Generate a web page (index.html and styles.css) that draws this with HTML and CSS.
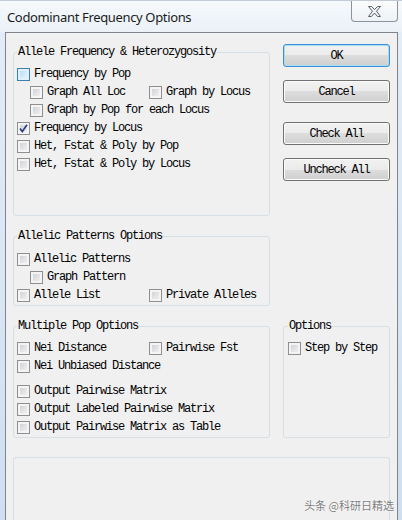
FILE: index.html
```html
<!DOCTYPE html>
<html lang="en">
<head>
  <meta charset="UTF-8">
  <title>Codominant Frequency Options</title>
  <link rel="stylesheet" href="styles.css">
</head>
<body>

  <div class="titlebar">
    <span class="title">Codominant Frequency Options</span>
    <div class="close-btn">
      <svg width="13" height="11" viewBox="0 0 13 11">
        <polygon points="0.5,0.5 3.5,0.5 6.5,3.6 9.5,0.5 12.5,0.5 8.5,5.2 12.5,10.5 9.5,10.5 6.5,7 3.5,10.5 0.5,10.5 4.5,5.2" fill="#f2f4f7" stroke="#5b6069" stroke-width="1"/>
      </svg>
    </div>
  </div>

  <div class="client">
    <div class="layout">

      <div class="col-left">
        <fieldset class="group group-freq">
          <legend>Allele Frequency &amp; Heterozygosity</legend>
          <label class="row"><span class="cb cb-hover"></span>Frequency by Pop</label>
          <div class="row indent">
            <label class="cell"><span class="cb"></span>Graph All Loc</label>
            <label><span class="cb"></span>Graph by Locus</label>
          </div>
          <label class="row indent"><span class="cb"></span>Graph by Pop for each Locus</label>
          <label class="row">
            <span class="cb">
              <svg width="11" height="11" viewBox="0 0 11 11"><polyline points="2,5.5 4.3,8.5 9,1.8" fill="none" stroke="#2c3f86" stroke-width="1.7"/></svg>
            </span>Frequency by Locus
          </label>
          <label class="row"><span class="cb"></span>Het, Fstat &amp; Poly by Pop</label>
          <label class="row"><span class="cb"></span>Het, Fstat &amp; Poly by Locus</label>
        </fieldset>

        <fieldset class="group group-patterns">
          <legend>Allelic Patterns Options</legend>
          <label class="row"><span class="cb"></span>Allelic Patterns</label>
          <label class="row indent"><span class="cb"></span>Graph Pattern</label>
          <div class="row">
            <label class="cell"><span class="cb"></span>Allele List</label>
            <label><span class="cb"></span>Private Alleles</label>
          </div>
        </fieldset>
      </div>

      <div class="col-buttons">
        <button class="btn btn-default">OK</button>
        <button class="btn">Cancel</button>
        <button class="btn btn-check">Check All</button>
        <button class="btn">Uncheck All</button>
      </div>

      <fieldset class="group group-multi">
        <legend>Multiple Pop Options</legend>
        <div class="row">
          <label class="cell"><span class="cb"></span>Nei Distance</label>
          <label><span class="cb"></span>Pairwise Fst</label>
        </div>
        <label class="row"><span class="cb"></span>Nei Unbiased Distance</label>
        <label class="row row-sep"><span class="cb"></span>Output Pairwise Matrix</label>
        <label class="row"><span class="cb"></span>Output Labeled Pairwise Matrix</label>
        <label class="row"><span class="cb"></span>Output Pairwise Matrix as Table</label>
      </fieldset>

      <fieldset class="group group-options">
        <legend>Options</legend>
        <label class="row"><span class="cb"></span>Step by Step</label>
      </fieldset>

      <div class="group group-empty">
        <span class="watermark">头条 @科研日精选</span>
      </div>

    </div>
  </div>

</body>
</html>
```

FILE: styles.css
```css
body {
  margin: 0;
  width: 402px;
  height: 520px;
  overflow: hidden;
  background: linear-gradient(#e4edf7, #cfdff0);
  font-family: "Liberation Mono", monospace;
  font-size: 12px;
  letter-spacing: -1.2px;
  color: #000;
}

.titlebar {
  height: 32px;
  display: flex;
  justify-content: space-between;
  align-items: flex-start;
  background: linear-gradient(#f6f9fc, #eaf1f8);
  border-top: 1px solid #c3ccd6;
  box-sizing: border-box;
}

.title {
  font-family: "Noto Sans", sans-serif;
  font-size: 13px;
  letter-spacing: -0.35px;
  color: #1b1b1b;
  padding: 7px 0 0 7px;
}

.close-btn {
  width: 47px;
  height: 21px;
  margin-right: 4px;
  box-sizing: border-box;
  border: 1px solid #8d939b;
  border-top: none;
  border-radius: 0 0 4px 4px;
  background: linear-gradient(#fbfcfd, #eef2f6);
  display: flex;
  justify-content: center;
  align-items: center;
}

.client {
  margin-left: 5px;
  width: 393px;
  height: 488px;
  box-sizing: border-box;
  border: 1px solid #7f858c;
  border-bottom: none;
  background-color: #f0f0f0;
  padding: 11px 7px 0 7px;
  overflow: hidden;
}

.layout {
  display: grid;
  grid-template-columns: 257px 107px;
  column-gap: 13px;
}

.col-left {
  display: flex;
  flex-direction: column;
  margin-top: 2px;
}

.group {
  margin: 0;
  border: 1px solid #d5dfe5;
  border-radius: 3px;
  padding: 8px 3px 1px 3px;
  min-width: 0;
}

.group legend {
  padding: 0 1px;
  line-height: 12px;
}

.group-freq {
  padding-top: 7px;
  padding-bottom: 42px;
}

.group-patterns {
  margin-top: 14px;
}

.group-multi, .group-options {
  margin-top: 14px;
  padding-top: 7px;
}

.group-options {
  padding-left: 4px;
}

.group-empty {
  grid-column: 1 / 3;
  margin-top: 19px;
  height: 61px;
  border-bottom: none;
  border-radius: 3px 3px 0 0;
  position: relative;
}

.watermark {
  position: absolute;
  right: -5px;
  top: 39px;
  font-family: "Noto Sans CJK SC", sans-serif;
  font-size: 11px;
  letter-spacing: 0;
  color: #7d7d7d;
  text-shadow: 0 0 2px #fff, 0 0 1px #fff;
}

.row {
  height: 18px;
  display: flex;
  align-items: center;
  white-space: nowrap;
}

.row label {
  display: flex;
  align-items: center;
}

.row .cell {
  width: 132px;
}

.indent {
  padding-left: 13px;
}

.indent .cell {
  width: 119px;
}

.row-sep {
  margin-top: 7px;
}

.cb {
  width: 13px;
  height: 13px;
  flex: none;
  box-sizing: border-box;
  border: 1px solid #8f8f8f;
  background: linear-gradient(135deg, #c9ccd1, #f7f7f7);
  box-shadow: inset 0 0 0 2px #f4f4f4;
  margin-right: 4px;
  display: flex;
}

.cb-hover {
  border-color: #3c7fb1;
  background: linear-gradient(135deg, #b4dcf7, #e9f6fd);
  box-shadow: inset 0 0 0 2px #dff1fc;
}

.col-buttons {
  display: flex;
  flex-direction: column;
}

.btn {
  height: 23px;
  width: 107px;
  margin: 13px 0 0 0;
  padding: 0;
  border: 1px solid #707070;
  border-radius: 3px;
  background: linear-gradient(#f2f2f2, #ebebeb 50%, #dddddd 50%, #cfcfcf);
  box-shadow: inset 0 0 0 1px #fbfbfb;
  font-family: "Liberation Mono", monospace;
  font-size: 12px;
  letter-spacing: -1.2px;
  color: #000;
}

.btn-default {
  margin-top: 0;
  border-color: #3c8fd8;
  box-shadow: inset 0 0 0 1px #a6dcf6;
}

.btn-check {
  margin-top: 19px;
}
```
